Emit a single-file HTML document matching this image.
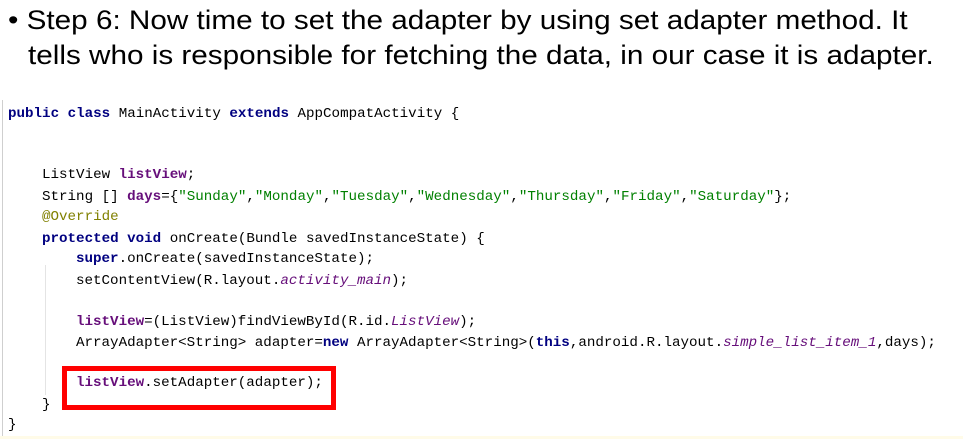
<!DOCTYPE html>
<html><head><meta charset="utf-8"><style>
html,body{margin:0;padding:0;background:#fff;width:963px;height:445px;overflow:hidden;position:relative}
.t{position:absolute;font-family:"Liberation Sans",sans-serif;font-size:26.5px;color:#000;white-space:nowrap;transform-origin:0 0;transform:scaleX(1.12)}
.code{position:absolute;left:2px;top:100px;width:961px;height:336px;border-left:1px solid #cfcfcf;background:#fff}
.yl{position:absolute;left:0;top:436px;width:963px;height:3px;background:#fffbe8}
.l{position:absolute;font-family:"Liberation Mono",monospace;font-size:14.2px;white-space:pre;color:#000;line-height:16px}
.k{color:#000080;font-weight:bold}
.f{color:#660e7a;font-weight:bold}
.fi{color:#660e7a;font-style:italic}
.s{color:#008000}
.a{color:#808000}
.box{position:absolute;left:62px;top:366px;width:264px;height:34px;border:5px solid #f00}
.vl{position:absolute;left:45px;width:1px;background:#e4e4e4}
</style></head><body>
<div class="t" style="left:8px;top:5px">• Step 6: Now time to set the adapter by using set adapter method. It</div>
<div class="t" style="left:28px;top:40px">tells who is responsible for fetching the data, in our case it is adapter.</div>
<div class="code"></div>
<div class="yl"></div>
<div class="vl" style="top:265px;height:130px"></div>
<div class="l" style="left:8px;top:106px"><span class="k">public class </span>MainActivity <span class="k">extends </span>AppCompatActivity {</div>
<div class="l" style="left:42px;top:167px">ListView <span class="f">listView</span>;</div>
<div class="l" style="left:42px;top:189px">String [] <span class="f">days</span>={<span class="s">"Sunday"</span>,<span class="s">"Monday"</span>,<span class="s">"Tuesday"</span>,<span class="s">"Wednesday"</span>,<span class="s">"Thursday"</span>,<span class="s">"Friday"</span>,<span class="s">"Saturday"</span>};</div>
<div class="l" style="left:42px;top:209px"><span class="a">@Override</span></div>
<div class="l" style="left:42px;top:231px"><span class="k">protected void </span>onCreate(Bundle savedInstanceState) {</div>
<div class="l" style="left:76px;top:251px"><span class="k">super</span>.onCreate(savedInstanceState);</div>
<div class="l" style="left:76px;top:273px">setContentView(R.layout.<span class="fi">activity_main</span>);</div>
<div class="l" style="left:76px;top:314px"><span class="f">listView</span>=(ListView)findViewById(R.id.<span class="fi">ListView</span>);</div>
<div class="l" style="left:76px;top:335px">ArrayAdapter&lt;String&gt; adapter=<span class="k">new </span>ArrayAdapter&lt;String&gt;(<span class="k">this</span>,android.R.layout.<span class="fi">simple_list_item_1</span>,days);</div>
<div class="l" style="left:76px;top:375px"><span class="f">listView</span>.setAdapter(adapter);</div>
<div class="l" style="left:42px;top:397px">}</div>
<div class="l" style="left:8px;top:417px">}</div>
<div class="box"></div>
</body></html>
